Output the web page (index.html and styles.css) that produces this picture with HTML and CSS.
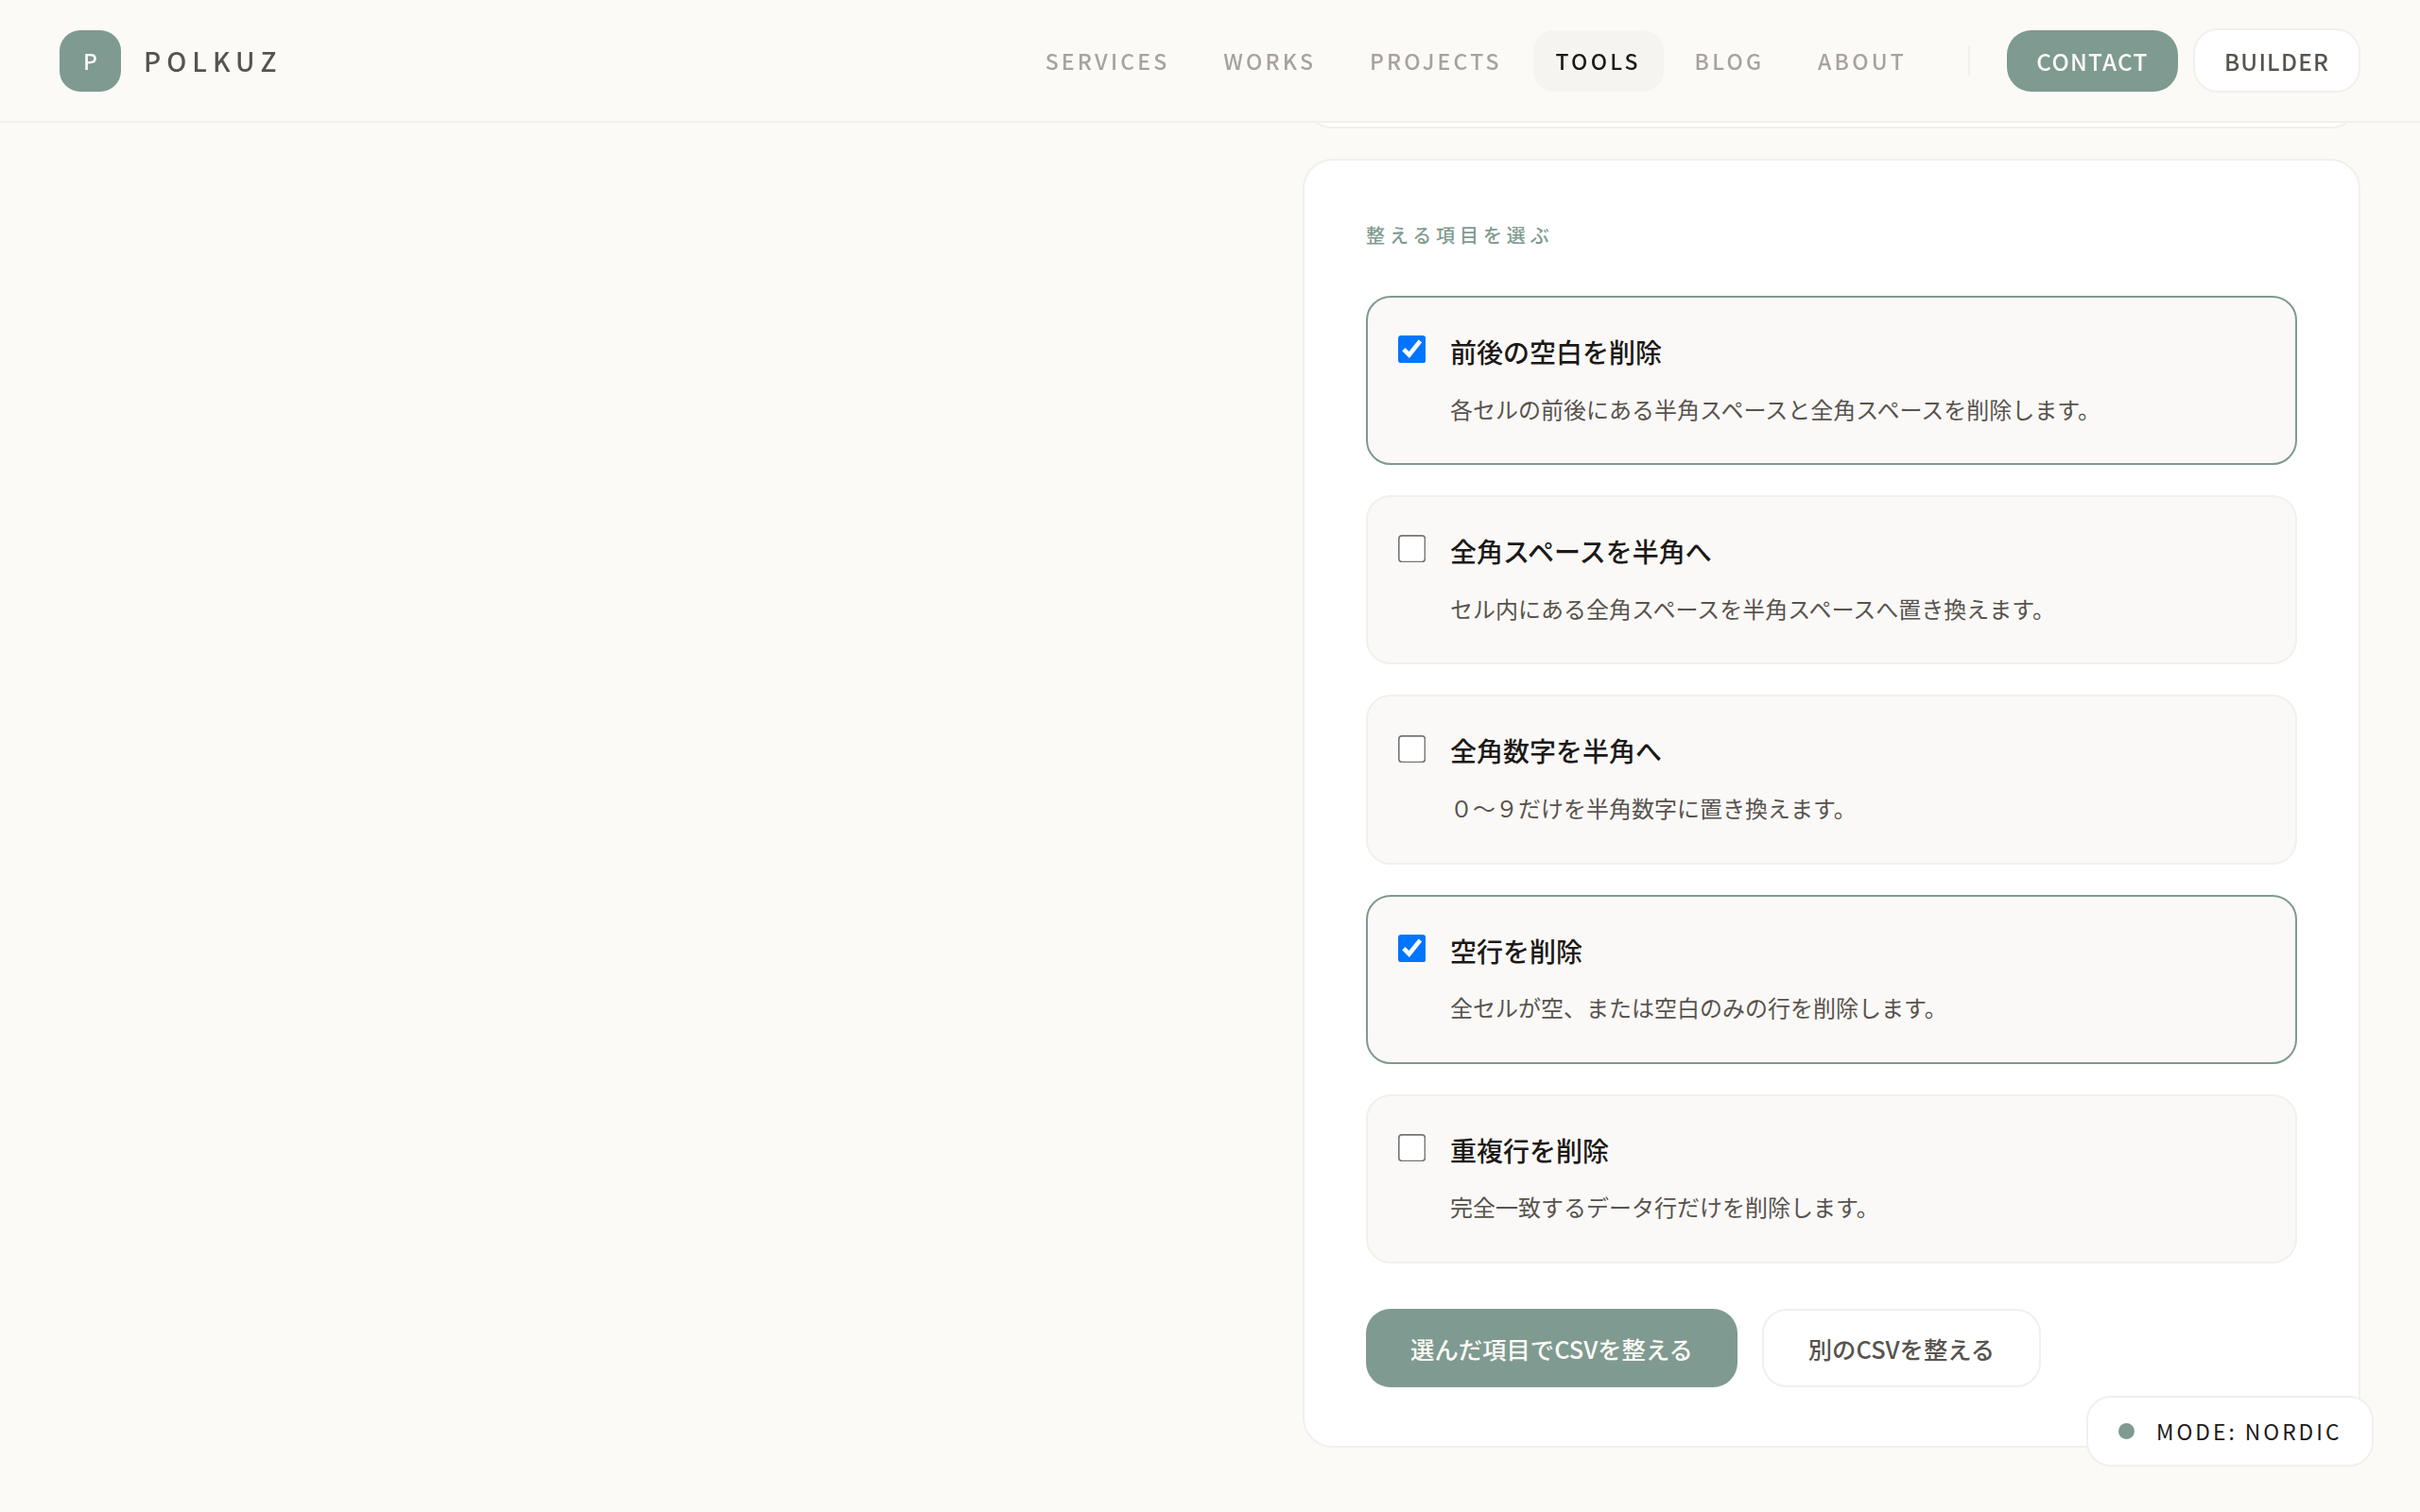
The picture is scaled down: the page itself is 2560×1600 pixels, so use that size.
FILE: index.html
```html
<!DOCTYPE html>
<html lang="ja">
<head>
<meta charset="utf-8">
<title>POLKUZ</title>
<link rel="stylesheet" href="styles.css">
</head>
<body>
<header class="site-header">
  <a class="brand"><span class="brand-mark">P</span><span class="brand-name">POLKUZ</span></a>
  <div class="header-right">
    <nav class="nav">
      <a class="nav-link">SERVICES</a>
      <a class="nav-link">WORKS</a>
      <a class="nav-link">PROJECTS</a>
      <a class="nav-link is-active">TOOLS</a>
      <a class="nav-link">BLOG</a>
      <a class="nav-link">ABOUT</a>
    </nav>
    <span class="divider"></span>
    <a class="head-btn head-btn-primary">CONTACT</a>
    <a class="head-btn head-btn-ghost">BUILDER</a>
  </div>
</header>
<main class="main">
  <div class="column">
    <div class="card stub"></div>
    <section class="card panel">
      <p class="eyebrow">整える項目を選ぶ</p>
      <div class="options">
        <label class="option is-on">
          <input class="check" type="checkbox" checked>
          <span class="option-body"><span class="option-title">前後の空白を削除</span><span class="option-desc">各セルの前後にある半角スペースと全角スペースを削除します。</span></span>
        </label>
        <label class="option">
          <input class="check" type="checkbox">
          <span class="option-body"><span class="option-title">全角スペースを半角へ</span><span class="option-desc">セル内にある全角スペースを半角スペースへ置き換えます。</span></span>
        </label>
        <label class="option">
          <input class="check" type="checkbox">
          <span class="option-body"><span class="option-title">全角数字を半角へ</span><span class="option-desc">０～９だけを半角数字に置き換えます。</span></span>
        </label>
        <label class="option is-on">
          <input class="check" type="checkbox" checked>
          <span class="option-body"><span class="option-title">空行を削除</span><span class="option-desc">全セルが空、または空白のみの行を削除します。</span></span>
        </label>
        <label class="option">
          <input class="check" type="checkbox">
          <span class="option-body"><span class="option-title">重複行を削除</span><span class="option-desc">完全一致するデータ行だけを削除します。</span></span>
        </label>
      </div>
      <div class="actions">
        <button class="action action-primary" type="button">選んだ項目でCSVを整える</button>
        <button class="action action-ghost" type="button">別のCSVを整える</button>
      </div>
    </section>
  </div>
</main>
<div class="mode"><span class="mode-dot"></span><span class="mode-text">MODE: NORDIC</span></div>
</body>
</html>
```
FILE: styles.css
```css
* { box-sizing: border-box; }
html, body { margin: 0; height: 1600px; overflow: hidden; }
body {
  background: #fbfaf6;
  color: #1c1917;
  font-family: "Noto Sans CJK JP", "Noto Sans", sans-serif;
}
.site-header {
  position: fixed;
  top: 0; left: 0; right: 0;
  height: 130px;
  padding: 0 63px;
  display: flex;
  align-items: center;
  justify-content: space-between;
  background: rgba(251, 250, 246, .96);
  backdrop-filter: blur(16px);
  border-bottom: 2px solid #f1f0ed;
  z-index: 5;
}
.brand { display: flex; align-items: center; gap: 24px; }
.brand-mark {
  width: 65px; height: 65px;
  border-radius: 22px;
  background: #7f9a90;
  color: #fbfaf6;
  font-size: 23px;
  font-weight: 500;
  display: flex; align-items: center; justify-content: center;
}
.brand-name { font-size: 28px; font-weight: 500; letter-spacing: 6px; color: #57534e; }
.header-right { display: flex; align-items: center; }
.nav { display: flex; align-items: center; gap: 8.8px; }
.nav-link {
  height: 65px;
  padding: 0 24px;
  border-radius: 22px;
  display: flex; align-items: center;
  font-size: 23px;
  font-weight: 500;
  letter-spacing: 3.2px;
  color: #a8a29e;
}
.nav-link.is-active { background: #f5f4f1; color: #1c1917; }
.divider { width: 2px; height: 32px; background: #f1f0ed; margin: 0 39px 0 41px; }
.head-btn {
  display: flex; align-items: center; justify-content: center;
  font-size: 24.375px;
  font-weight: 500;
  letter-spacing: 1.2px;
}
.head-btn-primary { width: 181px; height: 65px; border-radius: 26px; background: #7f9a90; color: #fbfaf6; }
.head-btn-ghost {
  width: 177px; height: 68px;
  margin-left: 16px;
  border-radius: 26px;
  background: #fff;
  border: 2px solid #f1f0ed;
  color: #57534e;
}
.main { display: flex; justify-content: flex-end; padding: 0 63px; }
.column { width: 1119px; display: flex; flex-direction: column; gap: 32px; }
.card { background: #fff; border: 2px solid #f1f0ed; border-radius: 32px; }
.stub { height: 136px; }
.panel { padding: 65px 65px 62px; }
.eyebrow {
  margin: 0 0 50px;
  font-size: 20px;
  line-height: 28px;
  letter-spacing: 4.9px;
  font-weight: 500;
  color: #7f9a90;
}
.options { display: flex; flex-direction: column; gap: 32px; }
.option {
  height: 179.2px;
  padding: 32px;
  display: flex;
  gap: 25px;
  background: #fbf9f7;
  border: 2px solid #f1f0ed;
  border-radius: 26px;
}
.option.is-on { border-color: #7f9a90; }
.check { zoom: 1.625; width: 18.5px; height: 18.5px; margin: 5px 0 0; flex: none; }
.option-body { display: flex; flex-direction: column; gap: 15.6px; }
.option-title { font-size: 28px; line-height: 50px; font-weight: 500; color: #1c1917; }
.option-desc { font-size: 24px; line-height: 40px; color: #57534e; }
.actions { display: flex; gap: 26px; margin-top: 48.5px; }
.action {
  height: 83px;
  border-radius: 26px;
  font-family: inherit;
  font-size: 25.35px;
  font-weight: 500;
}
.action-primary { width: 393px; background: #7f9a90; color: #fbfaf6; border: 0; }
.action-ghost { width: 295px; background: #fff; border: 2px solid #f1f0ed; color: #57534e; }
.mode {
  position: fixed;
  right: 49px; bottom: 48px;
  width: 304px; height: 75px;
  padding-left: 32px;
  display: flex; align-items: center; gap: 23px;
  background: #fff;
  border: 2px solid #f1f0ed;
  border-radius: 26px;
  z-index: 6;
}
.mode-dot { width: 17px; height: 17px; border-radius: 50%; background: #7f9a90; }
.mode-text { font-size: 22.75px; letter-spacing: 3px; color: #1c1917; }
```
